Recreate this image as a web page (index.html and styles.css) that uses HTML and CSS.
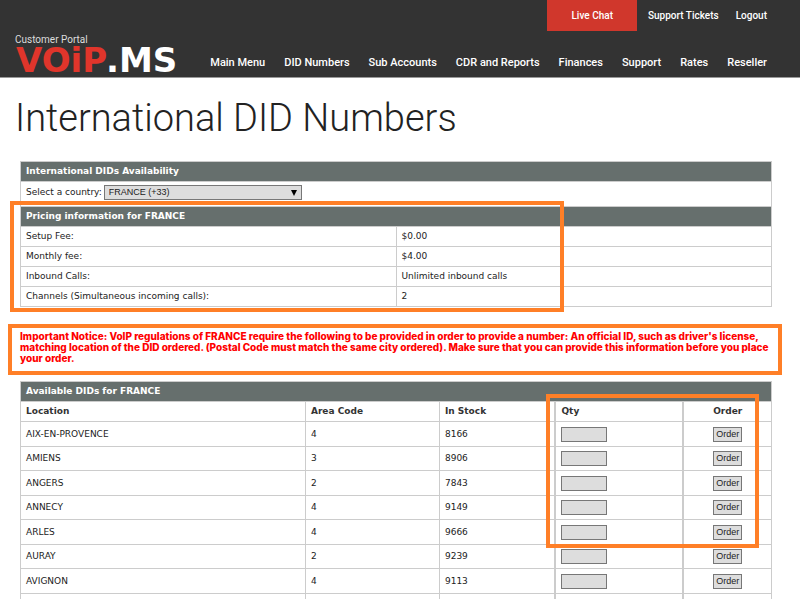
FILE: index.html
```html
<!DOCTYPE html>
<html lang="en">
<head>
    <meta charset="UTF-8">
    <meta name="viewport" content="width=device-width, initial-scale=1.0">
    <title>International DID Numbers</title>
    <link rel="stylesheet" href="styles.css">
</head>
<body>
    <header class="header">
        <a href="#" class="brand">
            <span class="brand-label">Customer Portal</span>
            <svg class="brand-logo" width="166" height="28" viewBox="0 0 166 28">
                <text class="logo-voip" x="1" y="26">VOiP</text>
                <text class="logo-ms" x="91" y="26">.MS</text>
            </svg>
        </a>
        <div class="menus">
            <nav class="top-menu">
                <a href="#" class="live-chat">Live Chat</a>
                <a href="#">Support Tickets</a>
                <a href="#">Logout</a>
            </nav>
            <nav class="main-menu">
                <a href="#">Main Menu</a>
                <a href="#">DID Numbers</a>
                <a href="#">Sub Accounts</a>
                <a href="#">CDR and Reports</a>
                <a href="#">Finances</a>
                <a href="#">Support</a>
                <a href="#">Rates</a>
                <a href="#">Reseller</a>
            </nav>
        </div>
    </header>

    <main class="content">
        <h1>International DID Numbers</h1>

        <section class="block">
            <table class="pricing">
                <tr><th colspan="2" class="title">International DIDs Availability</th></tr>
                <tr class="country-row">
                    <td colspan="2">
                        <div class="country">
                            <label for="country">Select a country:</label>
                            <span class="select-box">
                                <select id="country"><option>FRANCE (+33)</option></select>
                            </span>
                        </div>
                    </td>
                </tr>
                <tr><th colspan="2" class="title">Pricing information for FRANCE</th></tr>
                <tr><td>Setup Fee:</td><td>$0.00</td></tr>
                <tr><td>Monthly fee:</td><td>$4.00</td></tr>
                <tr><td>Inbound Calls:</td><td>Unlimited inbound calls</td></tr>
                <tr><td>Channels (Simultaneous incoming calls):</td><td>2</td></tr>
            </table>
            <div class="mark mark-pricing"></div>
        </section>

        <p class="notice">Important Notice: VoIP regulations of FRANCE require the following to be provided in order to provide a number: An official ID, such as driver's license,<br>
        matching location of the DID ordered. (Postal Code must match the same city ordered). Make sure that you can provide this information before you place<br>
        your order.</p>

        <section class="block">
            <table class="dids">
                <colgroup>
                    <col>
                    <col class="col-area">
                    <col class="col-stock">
                    <col class="col-qty">
                    <col class="col-order">
                </colgroup>
                <thead>
                    <tr><th colspan="5" class="title">Available DIDs for FRANCE</th></tr>
                    <tr><th>Location</th><th>Area Code</th><th>In Stock</th><th>Qty</th><th>Order</th></tr>
                </thead>
                <tbody>
                    <tr><td>AIX-EN-PROVENCE</td><td>4</td><td>8166</td><td><input type="text" aria-label="Quantity for AIX-EN-PROVENCE"></td><td><button type="button">Order</button></td></tr>
                    <tr><td>AMIENS</td><td>3</td><td>8906</td><td><input type="text" aria-label="Quantity for AMIENS"></td><td><button type="button">Order</button></td></tr>
                    <tr><td>ANGERS</td><td>2</td><td>7843</td><td><input type="text" aria-label="Quantity for ANGERS"></td><td><button type="button">Order</button></td></tr>
                    <tr><td>ANNECY</td><td>4</td><td>9149</td><td><input type="text" aria-label="Quantity for ANNECY"></td><td><button type="button">Order</button></td></tr>
                    <tr><td>ARLES</td><td>4</td><td>9666</td><td><input type="text" aria-label="Quantity for ARLES"></td><td><button type="button">Order</button></td></tr>
                    <tr><td>AURAY</td><td>2</td><td>9239</td><td><input type="text" aria-label="Quantity for AURAY"></td><td><button type="button">Order</button></td></tr>
                    <tr><td>AVIGNON</td><td>4</td><td>9113</td><td><input type="text" aria-label="Quantity for AVIGNON"></td><td><button type="button">Order</button></td></tr>
                    <tr><td></td><td></td><td></td><td></td><td></td></tr>
                </tbody>
            </table>
            <div class="mark mark-order"></div>
        </section>
    </main>
</body>
</html>
```

FILE: styles.css
```css
* {
    box-sizing: border-box;
}
body {
    margin: 0;
    font-family: Verdana, "DejaVu Sans", sans-serif;
    font-size: 9px;
    line-height: 11px;
    color: #222;
    background: #fff;
}

/* header */
.header {
    display: flex;
    justify-content: space-between;
    height: 78px;
    padding: 0 33px 0 15px;
    background: #333;
    border-bottom: 1px solid #999;
    font-family: Roboto, sans-serif;
}
.header a {
    color: #fff;
    text-decoration: none;
}
.brand {
    display: flex;
    flex-direction: column;
    padding-top: 34px;
}
.brand .brand-label {
    font-size: 10px;
    line-height: 12px;
    color: #ddd;
}
.brand-logo {
    display: block;
    overflow: visible;
    font-family: "DejaVu Sans", sans-serif;
    font-size: 34px;
    font-weight: bold;
}
.logo-voip {
    fill: #e0352b;
}
.logo-ms {
    fill: #fff;
}
.menus {
    display: flex;
    flex-direction: column;
    justify-content: space-between;
    align-items: flex-end;
    font-size: 11px;
    font-weight: 500;
    line-height: 16px;
    white-space: nowrap;
}
.top-menu {
    display: flex;
    gap: 17px;
    font-size: 10px;
    line-height: 31px;
}
.top-menu .live-chat {
    padding: 0 24px;
    margin-right: -6px;
    background: #d0372c;
}
.main-menu {
    display: flex;
    gap: 19px;
    padding-bottom: 6px;
}

/* page */
.content {
    padding: 0 28px 0 20px;
}
h1 {
    margin: 17px 0 20px -5px;
    font-family: Roboto, sans-serif;
    font-size: 38px;
    font-weight: 300;
    line-height: 46px;
    color: #222;
}
.block {
    position: relative;
}
table {
    width: 100%;
    border-collapse: collapse;
    table-layout: fixed;
}
th, td {
    height: 20px;
    padding: 0 5px;
    border: 1px solid #ccc;
    text-align: left;
}
.title {
    color: #fff;
    background: #666f6d;
}
.country-row td {
    height: 25px;
    padding-bottom: 3px;
}
.country {
    display: flex;
    align-items: center;
    gap: 2px;
}
.select-box {
    position: relative;
}
.select-box::after {
    content: "";
    position: absolute;
    top: 5px;
    right: 5px;
    border: 3px solid transparent;
    border-top: 6px solid #000;
    border-bottom: 0;
    pointer-events: none;
}
select {
    display: block;
    width: 198px;
    height: 15px;
    padding: 0 4px;
    appearance: none;
    border: 1px solid #777;
    border-radius: 0;
    background: #ddd;
    font: 9px/13px "Liberation Sans", Arial, sans-serif;
    color: #222;
}

.notice {
    margin: 17px -10px 6px -12px;
    padding: 3px 4px 7px 8px;
    border: 4px solid #ff7f27;
    color: #f00;
    font-family: Inter, sans-serif;
    font-size: 10px;
    font-weight: 800;
    white-space: nowrap;
}

.col-area { width: 134px; }
.col-stock { width: 116px; }
.col-qty { width: 128px; }
.col-order { width: 88px; }

.dids thead th {
    color: #333;
}
.dids thead .title {
    color: #fff;
}
.dids tbody td {
    height: 25px;
}
.dids tbody tr:nth-child(even) td {
    height: 24px;
}
.dids td:nth-child(n+4),
.dids th:nth-child(n+4) {
    border-left-width: 2px;
}
.dids td:last-child,
.dids th:nth-child(5) {
    text-align: center;
}
input {
    display: block;
    width: 46px;
    height: 15px;
    padding: 0 2px;
    border: 1px solid #777;
    background: #ddd;
    font: inherit;
}
button {
    display: block;
    height: 15px;
    margin: 0 auto;
    padding: 0 2px;
    border: 1px solid #777;
    background: #ddd;
    color: #222;
    font: 9px/13px "Liberation Sans", Arial, sans-serif;
}

/* orange highlight frames drawn over the tables */
.mark {
    position: absolute;
    border: 4px solid #ff7f27;
    pointer-events: none;
}
.mark-pricing {
    top: 40px;
    bottom: -5px;
    left: -10px;
    right: 208px;
}
.mark-order {
    top: 13px;
    right: 13px;
    width: 213px;
    height: 154px;
}
```
